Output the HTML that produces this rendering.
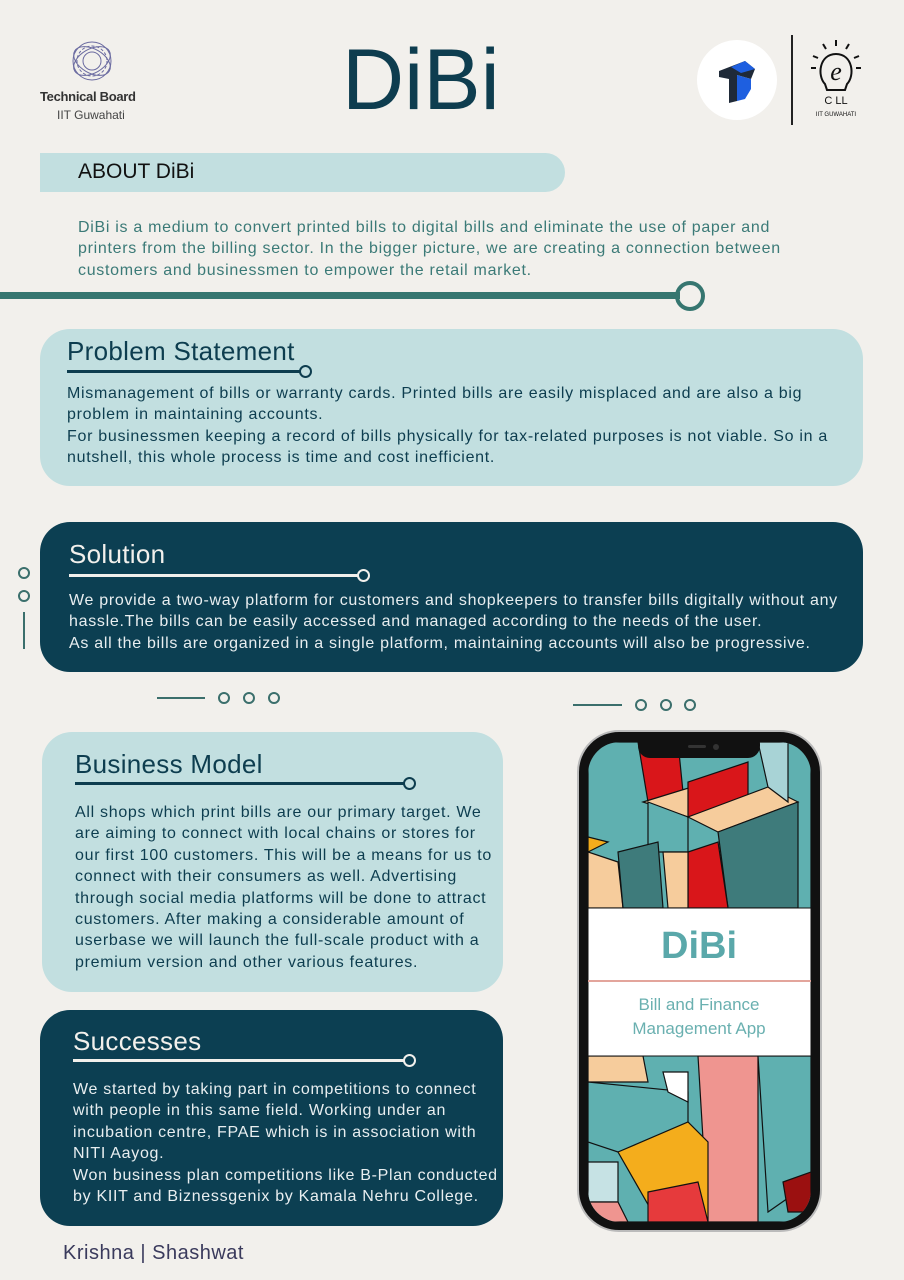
<!DOCTYPE html>
<html><head><meta charset="utf-8"><style>
*{margin:0;padding:0;box-sizing:border-box}
body{width:904px;height:1280px;background:#f2f0ec;position:relative;overflow:hidden;font-family:"Liberation Sans",sans-serif}
.a{position:absolute}
.t{font-size:16px;line-height:21.4px;letter-spacing:0.7px;white-space:nowrap}
.h{font-size:26px;letter-spacing:0.3px;white-space:nowrap}
.light{background:#c2dfe0;border-radius:30px}
.dark{background:#0c3f52;border-radius:30px}
.ul{position:absolute;height:3px}
.cir{position:absolute;border-radius:50%;background:transparent}
</style></head><body>

<!-- header -->
<svg class="a" style="left:68px;top:38px" width="48" height="46" viewBox="0 0 48 46">
<g fill="none" stroke="#6a6aa0" stroke-width="1">
<circle cx="24" cy="23" r="19"/><circle cx="24" cy="23" r="15" stroke-dasharray="3 2"/><circle cx="24" cy="23" r="9"/>
<ellipse cx="24" cy="23" rx="20" ry="12" transform="rotate(30 24 23)"/><ellipse cx="24" cy="23" rx="20" ry="12" transform="rotate(-30 24 23)"/>
</g></svg>
<div class="a" style="left:40px;top:89px;font-size:13px;font-weight:bold;color:#333;letter-spacing:-0.3px">Technical Board</div>
<div class="a" style="left:57px;top:108px;font-size:12px;color:#444">IIT Guwahati</div>
<div class="a" style="left:342px;top:32px;font-size:86px;color:#0e3d4f;letter-spacing:0px;line-height:96px">DiBi</div>
<div class="a" style="left:697px;top:40px;width:80px;height:80px;border-radius:50%;background:#fff"></div>
<svg class="a" style="left:715px;top:57px" width="44" height="46" viewBox="0 0 44 46">
<polygon points="4,14 30,4 40,12 36,22 22,18 22,44 14,46 14,22 4,20" fill="#1f2a38"/>
<polygon points="16,10 30,4 40,12 26,16" fill="#1e5fe0"/>
<polygon points="22,18 36,22 36,32 30,42 22,44" fill="#1e5fe0"/>
</svg>
<div class="a" style="left:791px;top:35px;width:2px;height:90px;background:#222"></div>
<svg class="a" style="left:805px;top:38px" width="62" height="80" viewBox="0 0 62 80">
<g stroke="#111" stroke-width="2" fill="none">
<line x1="31" y1="2" x2="31" y2="8"/><line x1="18" y1="6" x2="21" y2="11"/><line x1="44" y1="6" x2="41" y2="11"/><line x1="8" y1="18" x2="13" y2="20"/><line x1="54" y1="18" x2="49" y2="20"/><line x1="6" y1="30" x2="11" y2="30"/><line x1="51" y1="30" x2="56" y2="30"/>
<path d="M20 46 C12 38 14 16 31 16 C48 16 50 38 42 46 L40 52 L22 52 Z"/>
</g>
<text x="31" y="42" font-family="Liberation Serif" font-style="italic" font-size="26" text-anchor="middle" fill="#111">e</text>
<text x="31" y="66" font-size="11" text-anchor="middle" fill="#111">C  LL</text>
<text x="31" y="78" font-size="6" text-anchor="middle" fill="#111">IIT GUWAHATI</text>
</svg>

<!-- about -->
<div class="a light" style="left:40px;top:153px;width:525px;height:39px;border-radius:0 20px 20px 0"></div>
<div class="a" style="left:78px;top:160px;font-size:21px;color:#111">ABOUT DiBi</div>
<div class="a t" style="left:78px;top:217px;color:#3b7a77">DiBi is a medium to convert printed bills to digital bills and eliminate the use of paper and<br>printers from the billing sector. In the bigger picture, we are creating a connection between<br>customers and businessmen to empower the retail market.</div>
<div class="a" style="left:0;top:292px;width:680px;height:7px;background:#367670"></div>
<div class="cir" style="left:675px;top:281px;width:30px;height:30px;border:4px solid #367670"></div>

<!-- problem -->
<div class="a light" style="left:40px;top:329px;width:823px;height:157px"></div>
<div class="a h" style="left:67px;top:336px;color:#0d3d4f">Problem Statement</div>
<div class="ul" style="left:67px;top:370px;width:233px;background:#0d3d4f"></div>
<div class="cir" style="left:299px;top:365px;width:13px;height:13px;border:2.5px solid #0d3d4f"></div>
<div class="a t" style="left:67px;top:383px;color:#0d3d4f">Mismanagement of bills or warranty cards. Printed bills are easily misplaced and are also a big<br>problem in maintaining accounts.<br>For businessmen keeping a record of bills physically for tax-related purposes is not viable. So in a<br>nutshell, this whole process is time and cost inefficient.</div>

<!-- solution -->
<div class="a dark" style="left:40px;top:522px;width:823px;height:150px"></div>
<div class="a h" style="left:69px;top:539px;color:#f2f0ec">Solution</div>
<div class="ul" style="left:69px;top:574px;width:289px;background:#f2f0ec"></div>
<div class="cir" style="left:357px;top:569px;width:13px;height:13px;border:2.5px solid #f2f0ec"></div>
<div class="a t" style="left:69px;top:590px;color:#e8eef0">We provide a two-way platform for customers and shopkeepers to transfer bills digitally without any<br>hassle.The bills can be easily accessed and managed according to the needs of the user.<br>As all the bills are organized in a single platform, maintaining accounts will also be progressive.</div>
<div class="cir" style="left:18px;top:567px;width:12px;height:12px;border:2.5px solid #3b6f6c"></div>
<div class="cir" style="left:18px;top:590px;width:12px;height:12px;border:2.5px solid #3b6f6c"></div>
<div class="a" style="left:23px;top:612px;width:2px;height:37px;background:#3b6f6c"></div>

<!-- dots rows -->
<div class="a" style="left:157px;top:697px;width:48px;height:2px;background:#3b6f6c"></div>
<div class="cir" style="left:218px;top:692px;width:12px;height:12px;border:2.5px solid #3b6f6c"></div>
<div class="cir" style="left:243px;top:692px;width:12px;height:12px;border:2.5px solid #3b6f6c"></div>
<div class="cir" style="left:268px;top:692px;width:12px;height:12px;border:2.5px solid #3b6f6c"></div>
<div class="a" style="left:573px;top:704px;width:49px;height:2px;background:#3b6f6c"></div>
<div class="cir" style="left:635px;top:699px;width:12px;height:12px;border:2.5px solid #3b6f6c"></div>
<div class="cir" style="left:660px;top:699px;width:12px;height:12px;border:2.5px solid #3b6f6c"></div>
<div class="cir" style="left:684px;top:699px;width:12px;height:12px;border:2.5px solid #3b6f6c"></div>

<!-- business -->
<div class="a light" style="left:42px;top:732px;width:461px;height:260px"></div>
<div class="a h" style="left:75px;top:749px;color:#0d3d4f">Business Model</div>
<div class="ul" style="left:75px;top:782px;width:329px;background:#0d3d4f"></div>
<div class="cir" style="left:403px;top:777px;width:13px;height:13px;border:2.5px solid #0d3d4f"></div>
<div class="a t" style="left:75px;top:802px;color:#0d3d4f">All shops which print bills are our primary target. We<br>are aiming to connect with local chains or stores for<br>our first 100 customers. This will be a means for us to<br>connect with their consumers as well. Advertising<br>through social media platforms will be done to attract<br>customers. After making a considerable amount of<br>userbase we will launch the full-scale product with a<br>premium version and other various features.</div>

<!-- successes -->
<div class="a dark" style="left:40px;top:1010px;width:463px;height:216px"></div>
<div class="a h" style="left:73px;top:1026px;color:#f2f0ec">Successes</div>
<div class="ul" style="left:73px;top:1059px;width:331px;background:#f2f0ec"></div>
<div class="cir" style="left:403px;top:1054px;width:13px;height:13px;border:2.5px solid #f2f0ec"></div>
<div class="a t" style="left:73px;top:1079px;color:#e8eef0">We started by taking part in competitions to connect<br>with people in this same field. Working under an<br>incubation centre, FPAE which is in association with<br>NITI Aayog.<br>Won business plan competitions like B-Plan conducted<br>by KIIT and Biznessgenix by Kamala Nehru College.</div>

<div class="a" style="left:63px;top:1242px;font-size:20px;color:#3a3a5c;letter-spacing:0.5px">Krishna | Shashwat</div>

<!-- phone -->
<div class="a" style="left:577px;top:730px;width:245px;height:502px;border-radius:42px;background:#111;border:2px solid #bbb"></div>
<svg class="a" style="left:588px;top:742px" width="223" height="480" viewBox="0 0 223 480">
<defs><clipPath id="c"><rect width="223" height="480" rx="32"/></clipPath></defs>
<g clip-path="url(#c)" stroke="#111" stroke-width="1.2">
<rect width="223" height="480" fill="#5fb0b0"/>
<polygon points="50,0 90,0 95,50 60,60" fill="#d9161a"/>
<polygon points="55,60 120,40 160,55 100,75" fill="#f6cc9c"/>
<polygon points="60,60 100,75 100,110 60,110" fill="#5fb0b0"/>
<polygon points="100,75 160,55 160,20 100,40" fill="#d9161a"/>
<polygon points="100,75 180,45 210,60 130,90" fill="#f6cc9c"/>
<polygon points="130,90 210,60 210,166 140,166" fill="#3e7b7b"/>
<polygon points="100,110 130,100 140,166 100,166" fill="#d9161a"/>
<polygon points="0,95 20,100 0,110" fill="#f4ad1c"/>
<polygon points="0,110 30,120 35,166 0,166" fill="#f6cc9c"/>
<polygon points="30,110 70,100 75,166 35,166" fill="#3e7b7b"/>
<polygon points="75,110 100,110 100,166 80,166" fill="#f6cc9c"/>
<polygon points="170,0 200,0 200,60 180,45" fill="#a8d3d6"/>
<polygon points="0,314 55,314 60,340 0,340" fill="#f6cc9c"/>
<polygon points="0,340 100,350 100,400 30,410 0,400" fill="#5fb0b0"/>
<polygon points="110,314 170,314 170,480 120,480" fill="#ef9590"/>
<polygon points="170,314 223,314 223,440 180,470" fill="#5fb0b0"/>
<polygon points="30,410 100,380 120,400 120,480 70,480" fill="#f4ad1c"/>
<polygon points="0,420 30,420 30,460 0,460" fill="#c6e2e4"/>
<polygon points="60,450 110,440 120,480 60,480" fill="#e63a3c"/>
<polygon points="0,460 30,460 40,480 0,480" fill="#ef9590"/>
<polygon points="195,440 223,430 223,470 200,470" fill="#9b1010"/>
<polygon points="75,330 100,330 100,360 80,350" fill="#fff"/>
</g>
<rect x="0" y="166" width="223" height="148" fill="#fff" stroke="#111" stroke-width="1"/>
<line x1="0" y1="239" x2="223" y2="239" stroke="#e3a59c" stroke-width="2"/>
<text x="111" y="216" font-family="Liberation Sans" font-weight="bold" font-size="38" text-anchor="middle" fill="#5aa8aa">DiBi</text>
<text x="111" y="268" font-family="Liberation Sans" font-size="17" text-anchor="middle" fill="#6ab0b0">Bill and Finance</text>
<text x="111" y="292" font-family="Liberation Sans" font-size="17" text-anchor="middle" fill="#6ab0b0">Management App</text>
<rect x="50" y="-10" width="122" height="26" rx="12" fill="#111"/>
<circle cx="128" cy="5" r="3" fill="#333"/>
<rect x="100" y="3" width="18" height="3" rx="1.5" fill="#333"/>
</svg>
</body></html>
